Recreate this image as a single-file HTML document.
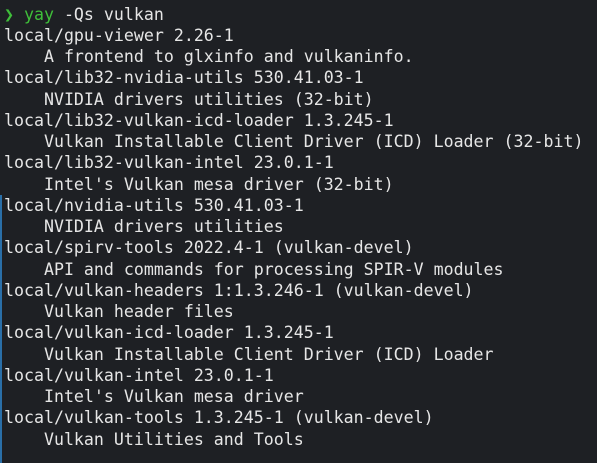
<!DOCTYPE html>
<html><head><style>
html,body{margin:0;padding:0;}
body{width:597px;height:463px;background:#1e2024;overflow:hidden;position:relative;}
pre{margin:0;position:absolute;left:4px;top:3.5px;font-family:"DejaVu Sans Mono","Liberation Mono",monospace;font-size:16.6px;line-height:21.25px;color:#e6e6e6;white-space:pre;}
.g{color:#3fbf3a;}
.bar{position:absolute;left:0;top:195px;width:2px;height:268px;background:#2a6fa8;}
</style></head><body>
<div class="bar"></div>
<pre><span class="g">❯ yay</span> -Qs vulkan
local/gpu-viewer 2.26-1
    A frontend to glxinfo and vulkaninfo.
local/lib32-nvidia-utils 530.41.03-1
    NVIDIA drivers utilities (32-bit)
local/lib32-vulkan-icd-loader 1.3.245-1
    Vulkan Installable Client Driver (ICD) Loader (32-bit)
local/lib32-vulkan-intel 23.0.1-1
    Intel's Vulkan mesa driver (32-bit)
local/nvidia-utils 530.41.03-1
    NVIDIA drivers utilities
local/spirv-tools 2022.4-1 (vulkan-devel)
    API and commands for processing SPIR-V modules
local/vulkan-headers 1:1.3.246-1 (vulkan-devel)
    Vulkan header files
local/vulkan-icd-loader 1.3.245-1
    Vulkan Installable Client Driver (ICD) Loader
local/vulkan-intel 23.0.1-1
    Intel's Vulkan mesa driver
local/vulkan-tools 1.3.245-1 (vulkan-devel)
    Vulkan Utilities and Tools</pre>
</body></html>
